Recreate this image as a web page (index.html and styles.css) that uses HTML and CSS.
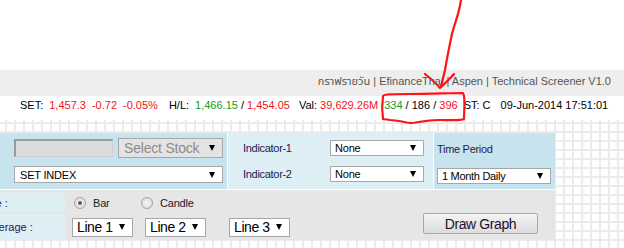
FILE: index.html
```html
<!DOCTYPE html>
<html lang="th">
<head>
    <meta charset="UTF-8">
    <title>Graph</title>
    <link rel="stylesheet" href="styles.css">
</head>
<body>

    <div class="top"></div>

    <div class="links">กราฟรายวัน | EfinanceThai | Aspen | Technical Screener V1.0</div>

    <div class="status">
        <span>SET:</span>
        <span class="dn">1,457.3</span>
        <span class="dn">-0.72</span>
        <span class="dn">-0.05%</span>
        <span class="grp">H/L:</span>
        <span><span class="up">1,466.15</span> / <span class="dn">1,454.05</span></span>
        <span class="grp-s">Val: <span class="dn">39,629.26M</span></span>
        <span><span class="up">334</span> / 186 / <span class="dn">396</span></span>
        <span>ST: C</span>
        <span class="date">09-Jun-2014 17:51:01</span>
    </div>

    <div class="grid-area">
        <div class="panel">
            <div class="cell stock">
                <div class="stock-row">
                    <input class="code" type="text" disabled>
                    <div class="sel sel-stock">Select Stock</div>
                </div>
                <div class="sel sel-index">SET INDEX</div>
            </div>
            <div class="cell indicators">
                <div class="ind-row">
                    <span class="ind-label">Indicator-1</span>
                    <div class="sel sel-none">None</div>
                </div>
                <div class="ind-row">
                    <span class="ind-label">Indicator-2</span>
                    <div class="sel sel-none">None</div>
                </div>
            </div>
            <div class="cell period">
                <div class="period-label">Time Period</div>
                <div class="sel sel-period">1 Month Daily</div>
            </div>
            <div class="options">
                <div class="opt-label">Chart Type :</div>
                <div class="radios">
                    <span class="radio checked"></span><span class="radio-text">Bar</span>
                    <span class="radio"></span><span class="radio-text">Candle</span>
                </div>
                <div class="draw"><button class="draw-btn">Draw Graph</button></div>
                <div class="opt-label second">Moving Average :</div>
                <div class="lines">
                    <div class="sel sel-line">Line 1</div>
                    <div class="sel sel-line l2">Line 2</div>
                    <div class="sel sel-line l3">Line 3</div>
                </div>
            </div>
        </div>
    </div>

    <!-- red pen marks drawn over the screenshot -->
    <svg class="marks" width="624" height="130" viewBox="0 0 624 130">
        <path d="M461,0 C459,14 455,22 452,34 C449,48 447,58 445,70 L441,87" />
        <path d="M425,74 C430,78 436,83 440,88 C444,84 450,79 454,74" />
        <path d="M383,96 C384,94 395,94 410,94 C430,94 450,93 463,93 L464,96 C465,104 464,112 464,119 C460,121 450,120 438,120 C425,120 418,123 410,123 C402,122 398,120 390,120 L383,119 C382,112 382,103 383,96" />
    </svg>

</body>
</html>
```

FILE: styles.css
```css
body {
    margin: 0;
    background: #fff;
    font-family: "Liberation Sans", Arial, "Noto Sans Thai", "Noto Sans", sans-serif;
    font-size: 11px;
    color: #000;
    position: relative;
    width: 624px;
    height: 248px;
    overflow: hidden;
}
.top {
    height: 70px;
}
.links {
    height: 26px;
    box-sizing: border-box;
    padding: 4px 13px 0 0;
    line-height: 14px;
    background: #eeeeee;
    color: #555;
    text-align: right;
}
.status {
    height: 24px;
    box-sizing: border-box;
    padding: 2px 0 0 20px;
    line-height: 14px;
    display: flex;
    gap: 6px;
    white-space: nowrap;
}
.status .grp {
    margin-left: 5px;
}
.status .grp-s {
    margin-left: 3px;
}
.status .date {
    margin-left: 4px;
}
.up {
    color: #1b9a1b;
}
.dn {
    color: #f4101c;
}
.grid-area {
    height: 128px;
    padding-top: 13px;
    box-sizing: border-box;
    background-color: #fff;
    background-image:
        linear-gradient(to right, #ececec 2px, transparent 2px),
        linear-gradient(to bottom, #ececec 2px, transparent 2px);
    background-size: 9px 9px;
    background-position: 5px 2px;
}
.panel {
    width: 555px;
    display: grid;
    grid-template-columns: 227px 205px 121px;
    grid-template-rows: 56px 50px;
    gap: 1px;
    background: #fff;
}
.cell {
    box-sizing: border-box;
}
.stock {
    background: #c7e3ee;
    padding: 5px 0 0 14px;
}
.stock-row {
    display: flex;
    align-items: center;
    gap: 5px;
}
.code {
    width: 99px;
    height: 18px;
    box-sizing: border-box;
    margin: 0;
    border-top: 2px solid #9a9a9a;
    border-left: 2px solid #9a9a9a;
    border-right: 1px solid #d0d0d0;
    border-bottom: 1px solid #d0d0d0;
    background: #dcdcdc;
}
.sel {
    position: relative;
    box-sizing: border-box;
    border: 1px solid #a7a7a7;
    background: #fff;
    padding-left: 4px;
    white-space: nowrap;
    display: flex;
    align-items: center;
}
.sel::after {
    content: "";
    position: absolute;
    right: 7px;
    top: 50%;
    margin-top: -3px;
    border-left: 3.5px solid transparent;
    border-right: 3.5px solid transparent;
    border-top: 6px solid #000;
}
.sel-stock {
    width: 105px;
    height: 20px;
    background: #e3e3e3;
    color: #8c8c8c;
    font-size: 14px;
    letter-spacing: -0.2px;
    padding-left: 5px;
}
.sel-index {
    width: 209px;
    height: 17px;
    margin-top: 8px;
    padding-left: 5px;
    letter-spacing: -0.2px;
}
.indicators {
    background: #ddeef4;
    padding: 7px 0 0 15px;
    display: flex;
    flex-direction: column;
    gap: 10px;
}
.ind-row {
    display: flex;
    align-items: center;
}
.ind-label {
    width: 87px;
    color: #201a55;
    letter-spacing: -0.3px;
}
.sel-none {
    width: 94px;
    height: 16px;
    letter-spacing: -0.2px;
}
.period {
    background: #c7e3ee;
    padding: 9px 0 0 3px;
}
.period-label {
    color: #2c1a48;
    letter-spacing: -0.3px;
    line-height: 14px;
}
.sel-period {
    width: 114px;
    height: 16px;
    margin-top: 12px;
    letter-spacing: -0.3px;
}
.options {
    grid-column: 1 / 4;
    background: #e6e6e6;
    display: grid;
    grid-template-columns: 65px 1fr auto;
    grid-template-rows: 19px 26px;
    row-gap: 2px;
    padding-top: 3px;
}
.opt-label {
    background: #ddeef4;
    color: #201a55;
    overflow: hidden;
    white-space: nowrap;
    text-indent: -52px;
    display: flex;
    align-items: center;
}
.opt-label.second {
    grid-row: 2;
    grid-column: 1;
}
.radios {
    display: flex;
    align-items: center;
    padding-left: 9px;
    letter-spacing: -0.2px;
    color: #1a1a2a;
}
.radio {
    width: 12px;
    height: 12px;
    box-sizing: border-box;
    border-radius: 50%;
    border: 1px solid #a0a0a0;
    background: radial-gradient(circle, #f4f4f4 0, #dadada 100%);
    position: relative;
}
.radio.checked::after {
    content: "";
    position: absolute;
    left: 3px;
    top: 3px;
    width: 4px;
    height: 4px;
    border-radius: 50%;
    background: #5a5a5a;
}
.radio-text {
    margin-left: 7px;
    width: 48px;
}
.draw {
    grid-column: 3;
    grid-row: 1 / 3;
    align-self: end;
    margin: 0 17px 6px 0;
}
.draw-btn {
    width: 115px;
    height: 21px;
    border: 1px solid #a8a8a8;
    border-radius: 2px;
    background: linear-gradient(#f4f4f4, #dcdcdc);
    font-family: "Liberation Sans", Arial, sans-serif;
    font-size: 14px;
    letter-spacing: -0.4px;
    color: #1a1030;
    padding: 0;
}
.lines {
    grid-row: 2;
    grid-column: 2;
    display: flex;
    align-items: center;
    padding-left: 7px;
}
.sel-line {
    width: 61px;
    height: 19px;
    font-size: 14px;
    letter-spacing: -0.4px;
}
.sel-line.l2 {
    margin-left: 12px;
}
.sel-line.l3 {
    margin-left: 23px;
}
.marks {
    position: absolute;
    left: 0;
    top: 0;
    pointer-events: none;
}
.marks path {
    fill: none;
    stroke: #ff1414;
    stroke-width: 2.2;
    stroke-linecap: round;
    stroke-linejoin: round;
}
```
